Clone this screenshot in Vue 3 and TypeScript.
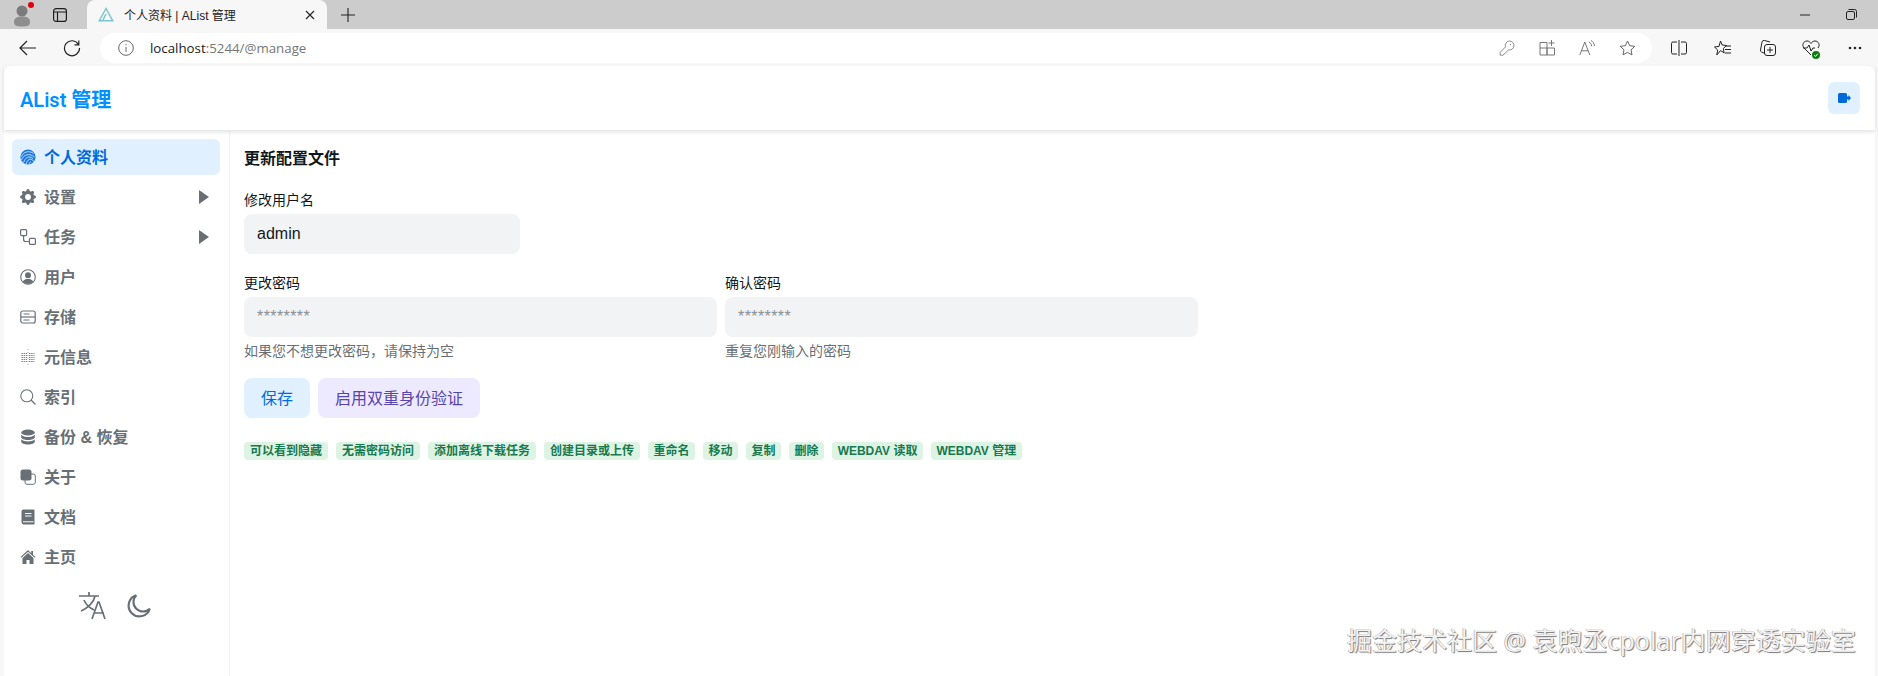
<template>
  <div class="window">
    <!-- browser tab strip -->
    <div class="tabstrip">
      <div class="profile">
        <svg width="20" height="24" viewBox="0 0 20 24"><circle cx="10" cy="8" r="5.5" fill="#7b7b7b" /><path d="M2 19c0-4 3-5.500 8-5.500s8 1.500 8 5.500-3 4.500-8 4.500-8-.5-8-4.500z" fill="#8e8e8e" /></svg>
        <span class="profile__dot"></span>
      </div>
      <div class="strip-btn">
        <svg width="16" height="16" viewBox="0 0 16 16" fill="none" stroke="#1f1f1f" stroke-width="1.200"><rect x="1.600" y="1.600" width="12.800" height="12.800" rx="2.500" /><path d="M1.600 5h12.800M5.500 5v9.400" /></svg>
      </div>
      <div class="tab">
        <svg width="16" height="15" viewBox="0 0 16 15" fill="none" stroke="#7cc6cb" stroke-width="1.500"><path d="M8 1.500 1.200 13.800h13.600zM8 7 5 13" /></svg>
        <span class="tab__title">个人资料 | AList 管理</span>
        <svg class="tab__close" width="10" height="10" viewBox="0 0 10 10" stroke="#222" stroke-width="1.100"><path d="M1 1l8 8M9 1 1 9" /></svg>
      </div>
      <div class="strip-plus">
        <svg width="14" height="14" viewBox="0 0 14 14" stroke="#222" stroke-width="1.100"><path d="M7 0v14M0 7h14" /></svg>
      </div>
      <div class="strip-space"></div>
      <div class="win-btn">
        <svg width="10" height="2" viewBox="0 0 10 2" stroke="#222"><path d="M0 1h10" /></svg>
      </div>
      <div class="win-btn">
        <svg width="11" height="11" viewBox="0 0 11 11" fill="none" stroke="#222"><rect x=".5" y="2.500" width="8" height="8" rx="1.500" /><path d="M2.500.5h6a2 2 0 0 1 2 2v6" /></svg>
      </div>
    </div>

    <!-- browser toolbar -->
    <div class="toolbar">
      <div class="tool">
        <svg width="18" height="16" viewBox="0 0 18 16" fill="none" stroke="#222" stroke-width="1.200"><path d="M17 8H1M8 1 1 8l7 7" /></svg>
      </div>
      <div class="tool">
        <svg width="18" height="18" viewBox="0 0 18 18" fill="none" stroke="#222" stroke-width="1.200"><path d="M15.500 5.500A7.500 7.500 0 1 0 16.500 9M15.800 1.500v4.300h-4.300" /></svg>
      </div>
      <div class="omnibox">
        <svg width="16" height="16" viewBox="0 0 16 16" fill="none" stroke="#666"><circle cx="8" cy="8" r="7.300" /><path d="M8 7v5M8 4v1.300" /></svg>
        <span class="omnibox__url">localhost<span class="omnibox__rest">:5244/@manage</span></span>
        <div class="omnibox__space"></div>
        <div class="omni-tool">
          <svg width="16" height="16" viewBox="0 0 16 16" fill="none" stroke="#8a8a8a"><path d="M10.500 1a4.500 4.500 0 1 1-1 8.900L4 15.200H1.200v-2.800l5.300-5.500A4.500 4.500 0 0 1 10.500 1z" /><path d="M11.500 4v1" /></svg>
        </div>
        <div class="omni-tool">
          <svg width="16" height="16" viewBox="0 0 16 16" fill="none" stroke="#777"><path d="M1 2.500h7v12.500H1zM8 8h7.500v7H8zM1 8h7M12.500 0v6M9.500 3h6" /></svg>
        </div>
        <div class="omni-tool">
          <svg width="16" height="16" viewBox="0 0 16 16" fill="none" stroke="#777"><path d="M.8 15 5.800 2l5 13M2.500 10.800h6.600M10 2c1.500.8 2.500 2.300 2.700 4.300M12 .5c2 1 3.200 3 3.500 5.500" /></svg>
        </div>
        <div class="omni-tool">
          <svg width="17" height="16" viewBox="0 0 17 16" fill="none" stroke="#666"><path d="m8.500 1 2.200 4.700 5.100.6-3.800 3.500 1 5.100-4.500-2.500L4 14.900l1-5.100-3.800-3.500 5.100-.6z" /></svg>
        </div>
      </div>
      <div class="tool tool--first">
        <svg width="16" height="16" viewBox="0 0 16 16" fill="none" stroke="#222"><path d="M8 0v16M6 2H2a1.500 1.500 0 0 0-1.500 1.500v9A1.500 1.500 0 0 0 2 14h4M10 2h4a1.500 1.500 0 0 1 1.500 1.500v9A1.500 1.500 0 0 1 14 14h-4" /></svg>
      </div>
      <div class="tool">
        <svg width="18" height="16" viewBox="0 0 18 16" fill="none" stroke="#222"><path d="M6.500 1 8.200 5l4.300.5-3.200 3 .9 4.300-3.700-2.200L2.800 15l.9-5-3.200-3L5 6.400zM12 6h5M11 9.500h6M11 13h6" /></svg>
      </div>
      <div class="tool">
        <svg width="17" height="17" viewBox="0 0 17 17" fill="none" stroke="#222"><path d="M6 14.500 2.500 13Q1 12.300 1.500 11L3 3q.5-2 2.500-1.500L11 3" /><rect x="5.500" y="5.500" width="11" height="11" rx="2.500" /><path d="M11 8v6M8 11h6" /></svg>
      </div>
      <div class="tool">
        <div class="health">
          <svg width="18" height="16" viewBox="0 0 18 16" fill="none" stroke="#222"><path d="M9 15 2 8C-.5 5 1.500 1 5 1c2 0 3 1 4 2.500C10 2 11 1 13 1c3.500 0 5.500 4 3 7M1 8h4l2-3 2 6 2-3h2" /></svg>
          <svg class="health__dot" width="8" height="8" viewBox="0 0 8 8"><circle cx="4" cy="4" r="4" fill="#107c10" /><path d="M2.200 4.200 3.500 5.400 5.800 2.800" fill="none" stroke="#fff" /></svg>
        </div>
      </div>
      <div class="tool">
        <svg width="14" height="4" viewBox="0 0 14 4" fill="#222"><circle cx="2" cy="2" r="1.300" /><circle cx="7" cy="2" r="1.300" /><circle cx="12" cy="2" r="1.300" /></svg>
      </div>
    </div>

    <!-- page -->
    <div class="page">
      <header class="header">
        <h1 class="header__title">AList 管理</h1>
        <button class="logout" aria-label="logout">
          <svg width="13" height="10" viewBox="0 0 13 10" fill="#006adc"><rect width="9" height="10" rx="1.500" /><path d="M9 3.500h1.500V2L13 5l-2.500 3V6.500H9z" /></svg>
        </button>
      </header>

      <div class="body">
        <aside class="sidebar">
          <nav class="nav">
            <div v-for="item in navItems" :key="item.label" class="nav__item" :class="{ 'nav__item--active': item.active }">
              <svg class="nav__icon" width="16" height="16" viewBox="0 0 16 16" v-html="item.icon"></svg>
              <span class="nav__label">{{ item.label }}</span>
              <svg v-if="item.more" class="nav__caret" width="10" height="14" viewBox="0 0 10 14"><path d="M0 0l10 7-10 7z" fill="#687076" /></svg>
            </div>
          </nav>
          <div class="side-tools">
            <svg width="30" height="30" viewBox="0 0 30 30" fill="none" stroke="#687076" stroke-width="1.700"><path d="M1 5h20M11 1v4M17 5c-1 6-7 12-14 15M6 9c2 5 6 8 10 10M14 28l6-17h1l6 17M16 22h10" /></svg>
            <svg width="26" height="26" viewBox="0 0 24 24" fill="none" stroke="#687076" stroke-width="2"><path d="M22 14.500A10 10 0 1 1 9.500 2a8.500 8.500 0 0 0 12.500 12.500z" /></svg>
          </div>
        </aside>

        <main class="main">
          <h2 class="main__title">更新配置文件</h2>

          <div class="field field--short">
            <label class="field__label">修改用户名</label>
            <input class="field__input" type="text" value="admin" />
          </div>

          <div class="passwords">
            <div class="field">
              <label class="field__label">更改密码</label>
              <input class="field__input" type="password" placeholder="********" />
              <div class="field__help">如果您不想更改密码，请保持为空</div>
            </div>
            <div class="field">
              <label class="field__label">确认密码</label>
              <input class="field__input" type="password" placeholder="********" />
              <div class="field__help">重复您刚输入的密码</div>
            </div>
          </div>

          <div class="actions">
            <button class="btn btn--save">保存</button>
            <button class="btn btn--otp">启用双重身份验证</button>
          </div>

          <div class="perms">
            <span v-for="perm in permissions" :key="perm" class="perm" :class="{ 'perm--tight': isTight(perm) }">{{ perm }}</span>
          </div>
        </main>
      </div>
    </div>

    <div class="watermark">掘金技术社区 @ 袁煦丞cpolar内网穿透实验室</div>
  </div>
</template>

<script setup lang="ts">
interface NavItem {
  label: string;
  icon: string;
  active?: boolean;
  more?: boolean;
}

const g = '#687076';

const gear =
  'M9.405 1.05c-.413-1.4-2.397-1.4-2.81 0l-.1.34a1.464 1.464 0 0 1-2.105.872l-.31-.17c-1.283-.698-2.686.705-1.987 1.987l.169.311c.446.82.023 1.841-.872 2.105l-.34.1c-1.4.413-1.4 2.397 0 2.81l.34.1a1.464 1.464 0 0 1 .872 2.105l-.17.31c-.698 1.283.705 2.686 1.987 1.987l.311-.169a1.464 1.464 0 0 1 2.105.872l.1.34c.413 1.4 2.397 1.4 2.81 0l.1-.34a1.464 1.464 0 0 1 2.105-.872l.31.17c1.283.698 2.686-.705 1.987-1.987l-.169-.311a1.464 1.464 0 0 1 .872-2.105l.34-.1c1.4-.413 1.4-2.397 0-2.81l-.34-.1a1.464 1.464 0 0 1-.872-2.105l.17-.31c.698-1.283-.705-2.686-1.987-1.987l-.311.169a1.464 1.464 0 0 1-2.105-.872l-.1-.34zM8 10.93a2.929 2.929 0 1 1 0-5.86 2.929 2.929 0 0 1 0 5.858z';

const navItems: NavItem[] = [
  {
    label: '个人资料',
    active: true,
    icon: `<circle cx="8" cy="8" r="7.600" fill="#1b78dd"/><path d="M1.500 7.500C3 3 9 1 13.500 4.500M1.500 11C3 6 9 3.500 14.500 8M3.500 13.500C5 9 9 6 13 9.500M6 15c1-3 3-6 6-4.500 1 .8 1.500 1.500 1.500 2.500M9 15.500c.5-1.500 1-2.500 2-3" fill="none" stroke="#cfe4fb" stroke-width=".9"/>`,
  },
  { label: '设置', more: true, icon: `<path d="${gear}" fill="${g}"/>` },
  {
    label: '任务',
    more: true,
    icon: `<g fill="none" stroke="${g}" stroke-width="1.200"><rect x=".6" y=".6" width="6" height="6" rx="1"/><rect x="9.400" y="9.400" width="6" height="6" rx="1"/><path d="M3.600 6.600V10.500q0 2 2 2h3.800"/></g>`,
  },
  {
    label: '用户',
    icon: `<circle cx="8" cy="8" r="7.300" fill="none" stroke="${g}" stroke-width="1.100"/><circle cx="8" cy="6.200" r="3" fill="${g}"/><path d="M2.800 12.500C4 10.500 6 10 8 10s4 .5 5.200 2.500A7 7 0 0 1 8 15a7 7 0 0 1-5.200-2.500z" fill="${g}"/>`,
  },
  {
    label: '存储',
    icon: `<g fill="none" stroke="${g}" stroke-width="1.200"><rect x=".8" y="2" width="14.400" height="12" rx="2"/><path d="M.8 8h14.400"/></g><path d="M3.500 5h6M3.500 11h6" stroke="${g}"/>`,
  },
  {
    label: '元信息',
    icon: `<path d="M1.500 4.500h5.500M9 4.500h5.500M1.500 6.500h5.500M9 6.500h5.500M1.500 8.500h5.500M9 8.500h5.500M1.500 10.500h5.500M9 10.500h5.500M1.500 12.500h5.500M9 12.500h5.500" stroke="#7d8489" stroke-width="1" stroke-dasharray="1.500 .7"/><path d="M8 0v16" stroke="#a5aaae" stroke-width="1" stroke-dasharray="1 2"/>`,
  },
  {
    label: '索引',
    icon: `<g fill="none" stroke="${g}" stroke-width="1.100"><circle cx="6.800" cy="6.800" r="6"/><path d="m11 11 4.500 4.500" stroke-width="1.300"/></g>`,
  },
  {
    label: '备份 & 恢复',
    icon: `<g fill="${g}"><ellipse cx="8" cy="3.500" rx="6.800" ry="3"/><path d="M1.200 5.500C2.500 7.500 5.500 8 8 8s5.500-.5 6.800-2.500V8c0 1.800-3 3-6.800 3S1.200 9.800 1.200 8z"/><path d="M1.200 10.300C2.500 12 5.500 12.500 8 12.500s5.500-.5 6.800-2.200V12.500c0 1.800-3 3-6.800 3s-6.800-1.200-6.800-3z"/></g>`,
  },
  {
    label: '关于',
    icon: `<rect x="5" y="5" width="10.300" height="10.300" rx="2" fill="none" stroke="${g}"/><rect x=".5" y=".5" width="11" height="11" rx="2.500" fill="${g}"/>`,
  },
  {
    label: '文档',
    icon: `<path d="M3.500.5h10a1 1 0 0 1 1 1V15.500h-11A2.500 2.500 0 0 1 1.500 13V2.500a2 2 0 0 1 2-2z" fill="${g}"/><path d="M5 4.500h6.500M5 7h6.500M3 12.800h10.500" stroke="#fff" stroke-width="1"/>`,
  },
  {
    label: '主页',
    icon: `<path d="M8 1 .5 8l.8.8L8 2.700l6.700 6.100.8-.8-2.500-2.300V2h-1.800v2.300z" fill="${g}"/><path d="M8 4 2.500 9v6h4v-4h3v4h4V9z" fill="${g}"/>`,
  },
];

const permissions: string[] = [
  '可以看到隐藏',
  '无需密码访问',
  '添加离线下载任务',
  '创建目录或上传',
  '重命名',
  '移动',
  '复制',
  '删除',
  'WEBDAV 读取',
  'WEBDAV 管理',
];

const isTight = (perm: string) => perm.length <= 3 || perm.startsWith('WEBDAV');
</script>

<style>
html,
body {
  margin: 0;
  background: #f7f7f7;
}
</style>

<style scoped>
.window {
  position: relative;
  display: flex;
  flex-direction: column;
  width: 1878px;
  height: 676px;
  overflow: hidden;
  background: #f7f7f7;
  font-family: "Liberation Sans", "Noto Sans CJK SC", sans-serif;
  color: #11181c;
}

.tabstrip {
  display: flex;
  align-items: stretch;
  height: 29px;
  flex-shrink: 0;
  background: #cccccc;
}

.profile {
  position: relative;
  display: flex;
  align-items: center;
  justify-content: center;
  width: 44px;
}

.profile__dot {
  position: absolute;
  top: 2px;
  left: 28px;
  width: 6px;
  height: 6px;
  border-radius: 50%;
  background: #e3000f;
}

.strip-btn {
  display: flex;
  align-items: center;
  justify-content: center;
  width: 32px;
}

.tab {
  position: relative;
  display: flex;
  align-items: center;
  width: 240px;
  margin-left: 11px;
  padding: 0 12px 0 11px;
  box-sizing: border-box;
  background: #f7f7f7;
  border-radius: 8px 8px 0 0;
}

.tab__title {
  margin-left: 10px;
  font-size: 12px;
  color: #222;
  white-space: nowrap;
}

.tab__close {
  margin-left: auto;
}

.strip-plus {
  display: flex;
  align-items: center;
  justify-content: center;
  width: 42px;
}

.strip-space {
  flex: 1;
}

.win-btn {
  display: flex;
  align-items: center;
  justify-content: center;
  width: 46px;
}

.win-btn:last-child {
  margin-right: 4px;
}

.toolbar {
  display: flex;
  align-items: center;
  height: 37px;
  flex-shrink: 0;
  padding-left: 6px;
  box-sizing: border-box;
}

.tool {
  display: flex;
  align-items: center;
  justify-content: center;
  width: 44px;
  flex-shrink: 0;
}

.tool--first {
  margin-left: 5px;
}

.health {
  position: relative;
  display: flex;
}

.health__dot {
  position: absolute;
  right: 0;
  bottom: -3px;
}

.omnibox {
  display: flex;
  align-items: center;
  width: 1552px;
  height: 30px;
  margin-left: 6px;
  padding: 0 5px 0 18px;
  box-sizing: border-box;
  background: #fff;
  border-radius: 15px;
}

.omnibox__url {
  margin-left: 16px;
  font-family: "Open Sans", sans-serif;
  font-size: 13.300px;
  color: #1b1b1b;
}

.omnibox__rest {
  color: #767676;
}

.omnibox__space {
  flex: 1;
}

.omni-tool {
  display: flex;
  align-items: center;
  justify-content: center;
  width: 40px;
}

.page {
  display: flex;
  flex-direction: column;
  flex: 1;
  min-height: 0;
  margin: 0 3px 0 4px;
  background: #fff;
  border-radius: 8px 8px 0 0;
}

.header {
  display: flex;
  align-items: center;
  justify-content: space-between;
  height: 64px;
  flex-shrink: 0;
  padding: 0 15px 0 16px;
  box-shadow: 0 2px 4px rgba(0, 0, 0, 0.12);
  position: relative;
}

.header__title {
  margin: 0;
  font-family: Roboto, "Noto Sans CJK SC", sans-serif;
  font-size: 20px;
  font-weight: 600;
  color: #0091ff;
}

.logout {
  display: flex;
  align-items: center;
  justify-content: center;
  width: 32px;
  height: 32px;
  padding: 0;
  border: none;
  border-radius: 6px;
  background: #e1f0ff;
}

.body {
  display: flex;
  flex: 1;
  min-height: 0;
}

.sidebar {
  width: 226px;
  flex-shrink: 0;
  box-sizing: border-box;
  border-right: 1px solid #f1f3f5;
}

.nav {
  display: flex;
  flex-direction: column;
  gap: 4px;
  padding: 9px 8px 0;
  width: 208px;
}

.nav__item {
  display: flex;
  align-items: center;
  height: 36px;
  padding: 0 11px 0 8px;
  border-radius: 6px;
  color: #687076;
}

.nav__item--active {
  background: #e1f0ff;
  color: #006adc;
}

.nav__icon {
  flex-shrink: 0;
}

.nav__label {
  margin-left: 8px;
  padding-bottom: 2px;
  font-size: 16px;
  font-weight: 600;
}

.nav__caret {
  margin-left: auto;
}

.side-tools {
  display: flex;
  align-items: center;
  justify-content: center;
  gap: 18px;
  margin-top: 16px;
  padding-right: 3px;
  height: 30px;
}

.main {
  flex: 1;
  padding: 17px 14px 0;
}

.main__title {
  margin: 0 0 19px;
  font-size: 16px;
  line-height: 24px;
  font-weight: 700;
}

.field {
  display: flex;
  flex-direction: column;
  min-width: 0;
}

.field--short {
  width: 276px;
}

.field__label {
  margin-bottom: 4px;
  font-size: 14px;
  line-height: 20px;
}

.field__input {
  width: 100%;
  height: 40px;
  box-sizing: border-box;
  padding: 0 13px;
  border: none;
  border-radius: 8px;
  background: #f1f3f5;
  font-family: inherit;
  font-size: 16px;
  color: #11181c;
  outline: none;
}

.field__input::placeholder {
  color: #889096;
  opacity: 1;
  letter-spacing: 0.4px;
}

.field__help {
  margin-top: 4px;
  font-size: 14px;
  line-height: 20px;
  color: #687076;
}

.passwords {
  display: grid;
  grid-template-columns: 473px 473px;
  gap: 8px;
  margin-top: 19px;
}

.actions {
  display: flex;
  gap: 8px;
  margin-top: 17px;
}

.btn {
  height: 40px;
  padding: 0 17px 2px;
  border: none;
  border-radius: 8px;
  font-family: inherit;
  font-size: 16px;
}

.btn--save {
  background: #e1f0ff;
  color: #006adc;
}

.btn--otp {
  background: #ede9fe;
  color: #5746af;
}

.perms {
  display: flex;
  gap: 8px;
  margin-top: 24px;
}

.perm {
  height: 18px;
  padding: 0 6px;
  border-radius: 4px;
  background: #ddf3e4;
  color: #18794e;
  font-size: 12px;
  line-height: 18px;
  font-weight: 700;
  white-space: nowrap;
}

.perm--tight {
  padding: 0 5.5px;
}

.watermark {
  position: absolute;
  left: 1347px;
  top: 622px;
  font-family: "Noto Sans", "Noto Sans CJK SC", sans-serif;
  font-size: 25px;
  line-height: 36px;
  color: #f2f2f2;
  white-space: nowrap;
  text-shadow: -0.5px -0.5px 0 #999, 1px 1px 1px #777;
}
</style>
